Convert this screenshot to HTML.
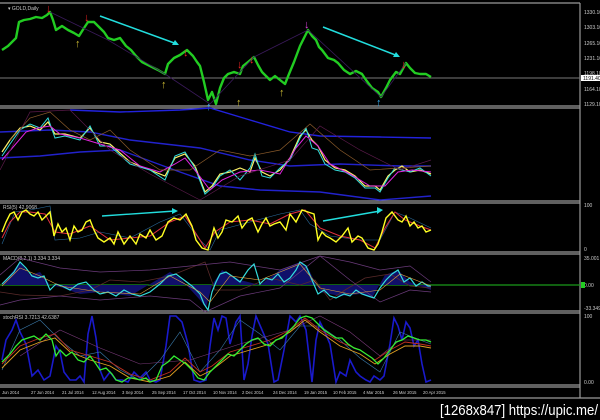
<!DOCTYPE html>
<html><head><meta charset="utf-8"><style>
html,body{margin:0;padding:0;background:#000;width:600px;height:420px;overflow:hidden}
svg{display:block}
text{font-family:"Liberation Sans",sans-serif}
</style></head><body>
<svg width="600" height="420" viewBox="0 0 600 420" xmlns="http://www.w3.org/2000/svg">
<rect width="600" height="420" fill="#000"/>
<g stroke="#9a9a9a" stroke-width="1.2" fill="none">
<line x1="0" y1="3" x2="580" y2="3"/>
<line x1="0" y1="106" x2="580" y2="106"/><line x1="0" y1="108" x2="580" y2="108"/>
<line x1="0" y1="201" x2="580" y2="201"/><line x1="0" y1="203" x2="580" y2="203"/>
<line x1="0" y1="252" x2="580" y2="252"/><line x1="0" y1="254" x2="580" y2="254"/>
<line x1="0" y1="311" x2="580" y2="311"/><line x1="0" y1="313" x2="580" y2="313"/>
<line x1="0" y1="385" x2="580" y2="385"/><line x1="0" y1="387" x2="580" y2="387"/>
<line x1="0" y1="398" x2="600" y2="398"/>
<line x1="580" y1="3" x2="580" y2="398"/>
</g>
<line x1="0" y1="78" x2="580" y2="78" stroke="#777" stroke-width="1"/>
<line x1="0" y1="285" x2="580" y2="285" stroke="#1a9a1a" stroke-width="1.2"/>
<g fill="#ccc" font-size="5">
<text x="8" y="10">▾ GOLD,Daily</text>
<text x="3" y="209">RSI(5) 42.9068</text>
<text x="3" y="260">MACD(8,2,1) 3.334 3.334</text>
<text x="3" y="319">stochRSI 3.7213 42.6387</text>
<text x="584" y="14">1330.10</text><text x="584" y="29">1303.10</text><text x="584" y="45">1265.10</text>
<text x="584" y="60">1231.10</text><text x="584" y="75">1198.10</text><text x="584" y="91">1164.10</text><text x="584" y="106">1129.10</text>
<text x="584" y="207">100</text><text x="584" y="251">0</text>
<text x="584" y="260">35.001</text><text x="584" y="287">0.00</text><text x="584" y="310">-33.349</text>
<text x="584" y="318">100</text><text x="584" y="384">0.00</text>
</g>
<rect x="581" y="75" width="19" height="6" fill="#fff"/><text x="583" y="80" font-size="5" fill="#000">1191.40</text>
<rect x="581" y="282" width="4" height="6" fill="#2c2"/>
<g fill="#ccc" font-size="4.2">
<text x="2" y="394">Jun 2014</text><text x="31" y="394">27 Jun 2014</text><text x="62" y="394">21 Jul 2014</text>
<text x="92" y="394">12 Aug 2014</text><text x="122" y="394">3 Sep 2014</text><text x="152" y="394">25 Sep 2014</text>
<text x="183" y="394">17 Oct 2014</text><text x="213" y="394">10 Nov 2014</text><text x="242" y="394">2 Dec 2014</text>
<text x="273" y="394">24 Dec 2014</text><text x="304" y="394">19 Jan 2015</text><text x="333" y="394">10 Feb 2015</text>
<text x="363" y="394">4 Mar 2015</text><text x="393" y="394">26 Mar 2015</text><text x="423" y="394">20 Apr 2015</text>
</g>
<polyline fill="none" stroke="#22cc22" stroke-width="2.4" stroke-linejoin="round" points="2,50 8,46 12,42 16,38 19,22 24,20 30,19 36,17 42,18 47,15 50,12 53,20 56,30 62,26 68,30 74,33 79,36 84,28 88,22 94,22 100,28 104,32 108,38 114,40 120,38 126,46 131,50 136,56 142,62 150,66 158,70 165,74 168,64 174,58 180,55 187,50 193,56 197,62 200,66 204,82 208,100 212,92 216,104 220,88 224,78 228,74 234,72 240,74 243,66 248,62 254,57 258,65 262,72 266,76 270,80 275,76 280,80 285,84 289,74 294,62 300,46 304,38 308,30 312,36 316,40 319,47 322,50 328,58 334,60 338,63 344,70 350,74 356,71 362,74 366,80 372,88 378,92 381,97 386,88 390,80 396,72 400,74 406,63 410,68 415,73 420,74 426,74 431,77"/>
<polyline fill="none" stroke="#3a1a5a" stroke-width="0.8" points="50,12 108,40 165,74 210,104 254,57 308,30 381,97 406,63"/>
<g font-size="11" font-weight="bold">
<text x="46" y="12" fill="#e22">↓</text><text x="84" y="21" fill="#e22">↓</text><text x="183" y="56" fill="#e22">↓</text>
<text x="237" y="68" fill="#e22">↓</text><text x="249" y="63" fill="#e22">↓</text><text x="401" y="68" fill="#e22">↓</text>
<text x="304" y="28" fill="#d4d">↓</text>
<text x="75" y="47" fill="#cb3">↑</text><text x="161" y="88" fill="#cb3">↑</text><text x="236" y="106" fill="#cb3">↑</text>
<text x="279" y="96" fill="#cb3">↑</text><text x="206" y="110" fill="#3ae">↑</text><text x="376" y="106" fill="#3ae">↑</text>
</g>
<g stroke="#22dddd" stroke-width="1.6"><line x1="100" y1="16" x2="177" y2="44"/><line x1="323" y1="27" x2="398" y2="56"/></g>
<polygon points="179,45 172,45 175,40" fill="#22dddd"/><polygon points="400,57 393,57 396,52" fill="#22dddd"/>
<g fill="none" stroke-width="1.4">
<polyline stroke="#2222dd" points="70,110 120,112 180,110 210,108 250,120 290,132 320,136 380,137 431,138"/>
<polyline stroke="#2222cc" points="0,132 50,130 90,132 130,140 200,148 250,160 290,166 340,164 400,166 431,166"/>
<polyline stroke="#2222cc" points="0,158 40,156 80,152 120,150 180,172 220,186 260,190 320,192 380,200 431,196"/>
<polyline stroke="#fff36a" stroke-width="1.2" points="2,152 10,140 20,128 30,126 40,130 48,122 55,134 65,134 80,138 90,128 100,142 110,144 130,162 150,170 165,176 175,158 185,154 195,166 205,192 212,186 220,174 230,172 240,168 250,172 255,158 262,172 270,176 280,170 290,158 300,136 306,130 312,140 318,146 325,160 335,168 345,170 355,176 365,186 375,186 380,190 388,176 395,170 402,166 410,172 420,170 431,174"/>
<polyline stroke="#33dddd" stroke-width="1" points="2,156 10,144 20,130 30,124 40,128 48,118 55,138 65,136 80,140 90,126 100,146 110,146 130,164 150,170 165,180 175,156 185,152 195,168 205,194 212,188 220,176 230,170 240,180 250,168 255,154 262,176 270,178 280,168 290,160 300,138 306,128 312,148 318,150 325,164 335,170 345,172 355,178 365,188 375,188 380,192 388,178 395,168 402,170 410,172 420,168 431,176"/>
<polyline stroke="#e024e0" stroke-width="1" points="2,160 14,146 26,132 38,128 50,126 60,134 80,138 100,144 120,150 140,166 160,172 175,164 185,158 198,174 210,190 222,180 240,172 260,170 280,174 296,148 306,136 318,146 330,164 350,174 370,186 385,186 398,172 412,170 431,172"/>
<polyline stroke="#8a5a2a" stroke-width="0.7" points="10,140 30,118 50,112 70,130 90,140 110,130 130,150 160,170 190,170 220,150 250,156 280,150 310,124 340,150 370,170 400,168 431,166"/>
<polyline stroke="#5a1a4a" stroke-width="0.7" points="0,170 30,112 70,110 110,150 150,174 200,200 240,176 290,160 320,126 360,150 400,170 431,160"/>
</g>
<g fill="none">
<polyline stroke="#2a6a9a" stroke-width="0.6" points="2,244 15,212 30,210 50,206 55,240 80,238 100,232 130,238 160,222 180,214 200,240 210,250 220,230 250,222 280,214 300,210 310,224 330,236 360,240 380,240 395,212 410,218 431,228"/>
<polyline stroke="#e03040" stroke-width="1" points="2,238 10,222 20,212 30,212 45,214 55,232 70,234 90,226 110,240 130,238 150,236 170,222 185,216 195,232 205,248 215,232 230,222 250,220 270,224 290,214 305,210 320,228 340,236 360,240 375,248 385,228 395,212 405,220 420,226 431,230"/>
<polyline stroke="#ffff22" stroke-width="1.4" points="2,232 6,222 10,214 14,212 18,220 22,212 26,210 30,214 34,216 38,212 42,220 46,216 50,212 54,236 58,224 62,232 66,228 70,240 74,226 78,232 82,230 86,222 90,220 94,230 98,238 104,242 110,238 114,244 118,232 124,244 130,236 136,244 140,234 146,238 150,230 156,240 162,236 168,222 174,218 180,220 186,214 192,226 196,240 202,248 208,250 214,228 218,238 222,232 226,220 232,222 238,216 242,228 248,220 252,218 258,232 262,224 266,218 270,226 274,224 280,222 286,230 290,214 296,222 302,210 308,212 314,214 318,240 322,232 326,236 330,238 336,242 342,236 348,228 352,242 358,236 362,238 368,248 374,250 378,244 382,232 386,218 392,212 398,220 402,222 406,216 410,226 414,222 418,228 422,226 426,232 431,230"/>
<line x1="102" y1="216" x2="175" y2="211" stroke="#22dddd" stroke-width="1.4"/>
<polygon points="178,211 172,208 172,214" fill="#22dddd"/>
<line x1="323" y1="221" x2="380" y2="211" stroke="#22dddd" stroke-width="1.4"/>
<polygon points="383,210 377,207 377,214" fill="#22dddd"/>
</g>
<g fill="none">
<polygon fill="#10106a" stroke="none" points="2,285 20,262 30,275 40,272 50,285 60,287 80,294 100,292 130,296 170,272 180,278 200,300 206,308 212,285 222,270 240,280 260,285 280,270 300,262 308,268 320,292 340,296 360,294 372,298 385,275 398,270 410,282 431,290 431,285 2,285"/>
<polyline stroke="#5a2a2a" stroke-width="0.8" points="0,292 20,295 60,296 90,290 110,280 140,282 170,276 195,266 205,262 215,290 240,290 270,278 300,285 315,280 330,300 345,290 365,278 390,274 410,286 431,288"/>
<polyline stroke="#6a3a7a" stroke-width="0.7" points="0,305 20,300 60,296 100,300 150,296 190,300 205,312 240,296 280,288 320,256 350,280 380,302 410,290 431,292"/>
<polyline stroke="#6a3a7a" stroke-width="0.7" points="0,275 20,258 60,268 100,272 150,270 190,266 230,262 280,270 320,256 350,262 380,270 410,266 431,282"/>
<polyline stroke="#33dddd" stroke-width="1.2" points="2,284 8,278 14,272 20,262 26,268 32,276 38,278 44,276 50,290 56,284 62,286 70,290 78,284 86,282 94,290 100,294 108,292 116,296 124,290 132,294 140,296 150,292 160,284 168,276 176,274 184,280 192,286 200,294 204,304 208,310 212,292 216,282 220,274 226,272 232,276 240,282 248,270 254,264 260,284 266,278 272,280 278,274 284,282 290,278 296,270 300,262 306,266 312,280 318,294 324,290 330,296 336,298 344,294 350,296 356,290 362,294 368,296 374,298 380,288 386,280 392,274 398,270 404,282 410,278 416,286 422,282 428,286 431,286"/>
<polyline stroke="#e0a040" stroke-width="0.6" points="2,286 20,268 40,276 60,286 100,292 140,294 170,276 200,292 210,302 230,276 260,280 300,264 320,288 350,294 380,290 400,274 431,286"/>
</g>
<g fill="none">
<polyline stroke="#1a1acc" stroke-width="1.6" points="2,360 6,340 12,330 16,320 20,332 26,344 32,376 38,370 44,380 50,376 56,346 60,352 64,372 70,380 76,380 80,376 84,382 88,334 92,316 96,338 100,370 104,380 110,372 116,380 122,380 128,382 134,372 140,378 146,372 150,380 156,382 160,380 166,346 170,316 176,316 182,322 188,344 194,380 200,382 206,380 210,346 214,318 218,330 222,316 226,318 230,344 236,322 240,316 244,380 248,364 252,336 256,316 262,330 268,344 274,382 278,380 284,350 290,316 296,322 300,316 306,330 312,382 316,340 320,322 324,330 330,344 336,382 340,372 346,376 350,360 356,372 360,376 366,380 370,382 374,376 380,380 384,376 390,344 394,318 398,326 402,340 406,322 410,328 414,346 418,340 422,364 426,382 431,380"/>
<polyline stroke="#3a7aaa" stroke-width="0.6" points="2,370 20,330 40,320 60,340 80,356 100,352 120,370 140,380 160,360 180,332 200,372 220,350 240,320 260,334 280,350 300,326 320,326 340,340 360,358 380,372 400,332 420,340 431,344"/>
<polyline stroke="#7a3a7a" stroke-width="0.6" points="20,356 60,330 100,348 140,364 190,360 240,344 290,330 320,316 350,332 380,356 400,340 431,340"/>
<polyline stroke="#c03020" stroke-width="0.9" points="2,364 20,346 40,338 55,334 70,350 90,356 110,362 130,374 150,380 170,372 185,358 200,372 212,366 230,352 250,346 270,340 290,330 305,318 320,330 340,342 360,350 375,360 390,350 405,342 420,344 431,346"/>
<polyline stroke="#e0a020" stroke-width="0.9" points="2,368 20,350 40,342 55,338 70,352 90,360 110,366 130,378 150,382 170,376 185,362 200,376 212,370 230,356 250,350 270,344 290,332 305,320 320,332 340,346 360,354 375,364 390,354 405,346 420,346 431,348"/>
<polyline stroke="#33ee33" stroke-width="1.3" points="2,362 10,354 16,346 22,340 28,338 34,336 40,340 46,334 52,340 56,356 60,350 66,356 72,352 78,360 84,362 90,356 96,364 100,370 106,368 112,374 116,380 122,382 128,378 134,378 140,380 146,378 150,382 156,380 162,366 168,362 174,356 180,360 186,364 192,370 198,378 204,380 210,372 216,366 222,360 228,354 234,356 240,350 246,344 252,340 258,338 264,344 270,346 276,340 282,338 288,332 294,326 300,318 306,316 312,318 318,324 324,330 330,334 336,338 342,338 348,344 354,348 360,350 366,354 372,358 378,364 384,358 390,350 396,342 402,340 408,336 414,338 420,340 426,340 431,342"/>
</g>
<rect x="0" y="399" width="600" height="21" fill="#000"/>
<text x="440" y="415" font-size="15" fill="#fff" font-family="DejaVu Sans, sans-serif" textLength="158" lengthAdjust="spacingAndGlyphs">[1268x847] https://upic.me/</text>
</svg>
</body></html>
